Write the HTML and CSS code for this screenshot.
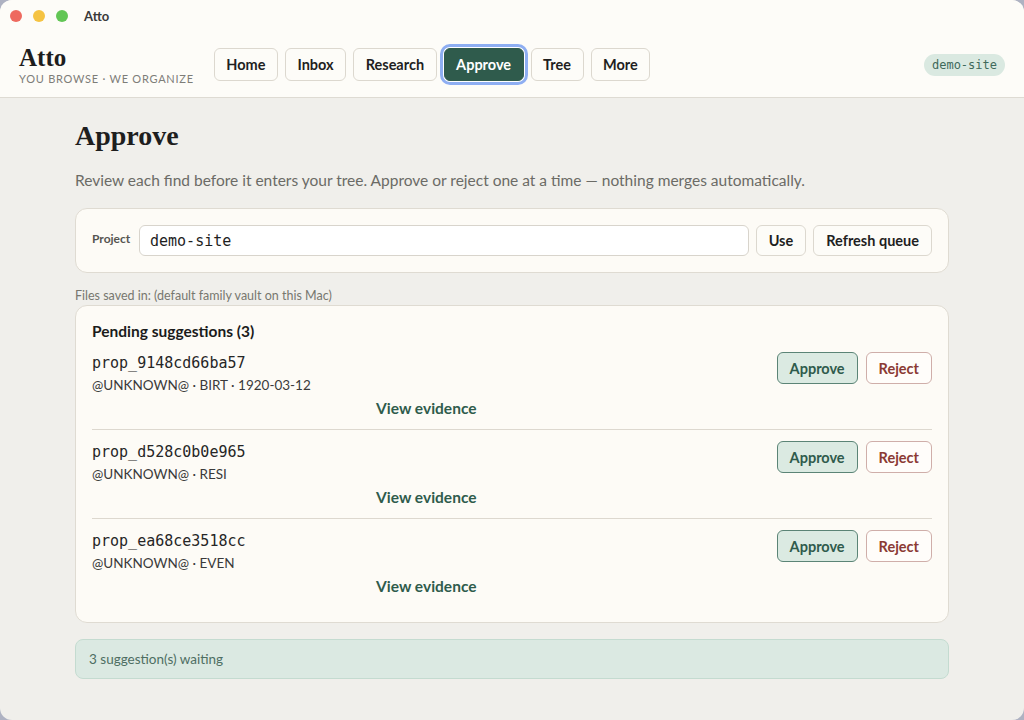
FILE: index.html
```html
<!DOCTYPE html>
<html lang="en">

<head>
    <meta charset="UTF-8">
    <meta name="viewport" content="width=device-width, initial-scale=1.0">
    <title>Atto</title>
    <link rel="stylesheet" href="styles.css">
</head>

<body>
    <div class="window">
        <div class="titlebar">
            <span class="light red"></span>
            <span class="light yellow"></span>
            <span class="light green"></span>
            <span class="window-title">Atto</span>
        </div>

        <header class="top-bar">
            <div class="brand">
                <div class="brand-name">Atto</div>
                <div class="brand-tag">YOU BROWSE · WE ORGANIZE</div>
            </div>
            <nav class="nav">
                <button class="btn">Home</button>
                <button class="btn">Inbox</button>
                <button class="btn">Research</button>
                <button class="btn active">Approve</button>
                <button class="btn">Tree</button>
                <button class="btn">More</button>
            </nav>
            <div class="site-badge">demo-site</div>
        </header>

        <main class="content">
            <h1 class="page-title">Approve</h1>
            <p class="lead">Review each find before it enters your tree. Approve or reject one at a time — nothing merges automatically.</p>

            <div class="card project-card">
                <label for="project" class="project-label">Project</label>
                <input type="text" id="project" value="demo-site">
                <button class="btn">Use</button>
                <button class="btn">Refresh queue</button>
            </div>

            <div class="files-note">Files saved in: (default family vault on this Mac)</div>

            <div class="card queue">
                <div class="queue-title">Pending suggestions (3)</div>

                <div class="row">
                    <div class="row-main">
                        <div class="prop-id">prop_9148cd66ba57</div>
                        <div class="prop-meta">@UNKNOWN@ · BIRT · 1920-03-12</div>
                        <div class="evidence">View evidence</div>
                    </div>
                    <div class="row-actions">
                        <button class="btn approve">Approve</button>
                        <button class="btn reject">Reject</button>
                    </div>
                </div>

                <div class="row">
                    <div class="row-main">
                        <div class="prop-id">prop_d528c0b0e965</div>
                        <div class="prop-meta">@UNKNOWN@ · RESI</div>
                        <div class="evidence">View evidence</div>
                    </div>
                    <div class="row-actions">
                        <button class="btn approve">Approve</button>
                        <button class="btn reject">Reject</button>
                    </div>
                </div>

                <div class="row">
                    <div class="row-main">
                        <div class="prop-id">prop_ea68ce3518cc</div>
                        <div class="prop-meta">@UNKNOWN@ · EVEN</div>
                        <div class="evidence">View evidence</div>
                    </div>
                    <div class="row-actions">
                        <button class="btn approve">Approve</button>
                        <button class="btn reject">Reject</button>
                    </div>
                </div>
            </div>

            <div class="status">3 suggestion(s) waiting</div>
        </main>
    </div>
</body>

</html>
```

FILE: styles.css
```css
body {
    margin: 0;
    padding: 0;
    background-color: #aeb2c2;
    font-family: Lato, "Open Sans", sans-serif;
}

.window {
    width: 1024px;
    height: 720px;
    border-radius: 12px;
    overflow: hidden;
    display: flex;
    flex-direction: column;
    background-color: #f0efeb;
}

.titlebar {
    height: 32px;
    display: flex;
    align-items: center;
    padding-left: 4px;
    background-color: #fdfcf8;
}

.light {
    width: 12px;
    height: 12px;
    border-radius: 50%;
    margin: 0 5.5px;
}

.red {
    background-color: #ee6a5f;
}

.yellow {
    background-color: #f5c342;
}

.green {
    background-color: #62c655;
}

.window-title {
    margin-left: 11px;
    font-size: 13px;
    font-weight: bold;
    color: #3a3a3a;
}

.top-bar {
    height: 66px;
    display: flex;
    align-items: center;
    padding: 0 19px;
    background-color: #fdfcf8;
    border-bottom: 1px solid #dedbd3;
    box-sizing: border-box;
}

.brand {
    margin-right: 20px;
}

.brand-name {
    font-family: "Liberation Serif", serif;
    font-weight: bold;
    font-size: 25px;
    line-height: 26px;
    color: #1d1d1d;
}

.brand-tag {
    font-size: 11px;
    letter-spacing: 0.75px;
    color: #7d7d78;
    margin-top: 1px;
}

.nav {
    display: flex;
    gap: 7px;
    flex: 1;
}

.btn {
    font-family: Lato, "Open Sans", sans-serif;
    font-size: 14.5px;
    font-weight: bold;
    color: #1f1f1f;
    background-color: #fdfcf8;
    border: 1px solid #dcd8cf;
    border-radius: 6px;
    padding: 0 12px;
    height: 33px;
    cursor: pointer;
}

.nav .btn {
    padding: 0 11.5px;
}

.nav .active {
    background-color: #2f5b4c;
    border-color: #2f5b4c;
    color: white;
    box-shadow: 0 0 0 1px #ffffff, 0 0 0 4px #8eaef2;
}

.site-badge {
    font-family: "DejaVu Sans Mono", monospace;
    font-size: 12px;
    color: #3f6a5b;
    background-color: #dae9e1;
    border-radius: 12px;
    padding: 4px 8px;
}

.content {
    flex: 1;
    width: 874px;
    margin: 0 auto;
    padding-top: 21px;
}

.page-title {
    font-family: "Liberation Serif", serif;
    font-size: 28px;
    line-height: 34px;
    color: #1e1e1e;
    margin: 0;
}

.lead {
    font-size: 15.5px;
    line-height: 22px;
    color: #6b6b66;
    margin: 16px 0 17px;
}

.card {
    background-color: #fdfbf6;
    border: 1px solid #dfdbd2;
    border-radius: 12px;
}

.project-card {
    display: flex;
    align-items: center;
    gap: 7px;
    padding: 16px;
}

.project-label {
    font-size: 12px;
    font-weight: bold;
    color: #555550;
    margin-bottom: 5px;
    width: 40px;
}

.project-card input {
    flex: 1;
    height: 31px;
    box-sizing: border-box;
    border: 1px solid #d8d4cc;
    border-radius: 6px;
    background-color: #ffffff;
    padding: 0 10px;
    font-family: "DejaVu Sans Mono", monospace;
    font-size: 15px;
    color: #1e1e1e;
}

.project-card .btn {
    height: 31px;
}

.files-note {
    font-size: 12.5px;
    line-height: 14px;
    color: #77776f;
    margin: 16px 0 2px;
}

.queue {
    padding: 15px 16px;
}

.queue-title {
    font-size: 15.5px;
    font-weight: bold;
    line-height: 20px;
    color: #1b1b1b;
}

.row {
    display: flex;
    align-items: flex-start;
    gap: 16px;
    padding: 11px 0;
}

.row + .row {
    border-top: 1px solid #ddd8cf;
}

.row-main {
    flex: 1;
}

.prop-id {
    font-family: "DejaVu Sans Mono", monospace;
    font-size: 15px;
    line-height: 22px;
    color: #262626;
}

.prop-meta {
    font-size: 13.5px;
    line-height: 18px;
    color: #3a3a3a;
    margin-top: 2px;
}

.evidence {
    font-size: 15.5px;
    font-weight: bold;
    line-height: 20px;
    color: #2f5b4c;
    text-align: center;
    margin-top: 4px;
}

.row-actions {
    display: flex;
    gap: 8px;
}

.row-actions .btn {
    height: 32px;
    padding: 0 12px;
}

.approve {
    background-color: #dbeae2;
    border-color: #5b8476;
    color: #2f5b4c;
}

.reject {
    background-color: #fffdfa;
    border-color: #cfaea9;
    color: #8b3a33;
}

.status {
    margin-top: 16px;
    height: 40px;
    box-sizing: border-box;
    display: flex;
    align-items: center;
    padding: 0 13px;
    font-size: 13.5px;
    color: #4e6e62;
    background-color: #dbe9e2;
    border: 1px solid #c4dbd0;
    border-radius: 8px;
}
```
